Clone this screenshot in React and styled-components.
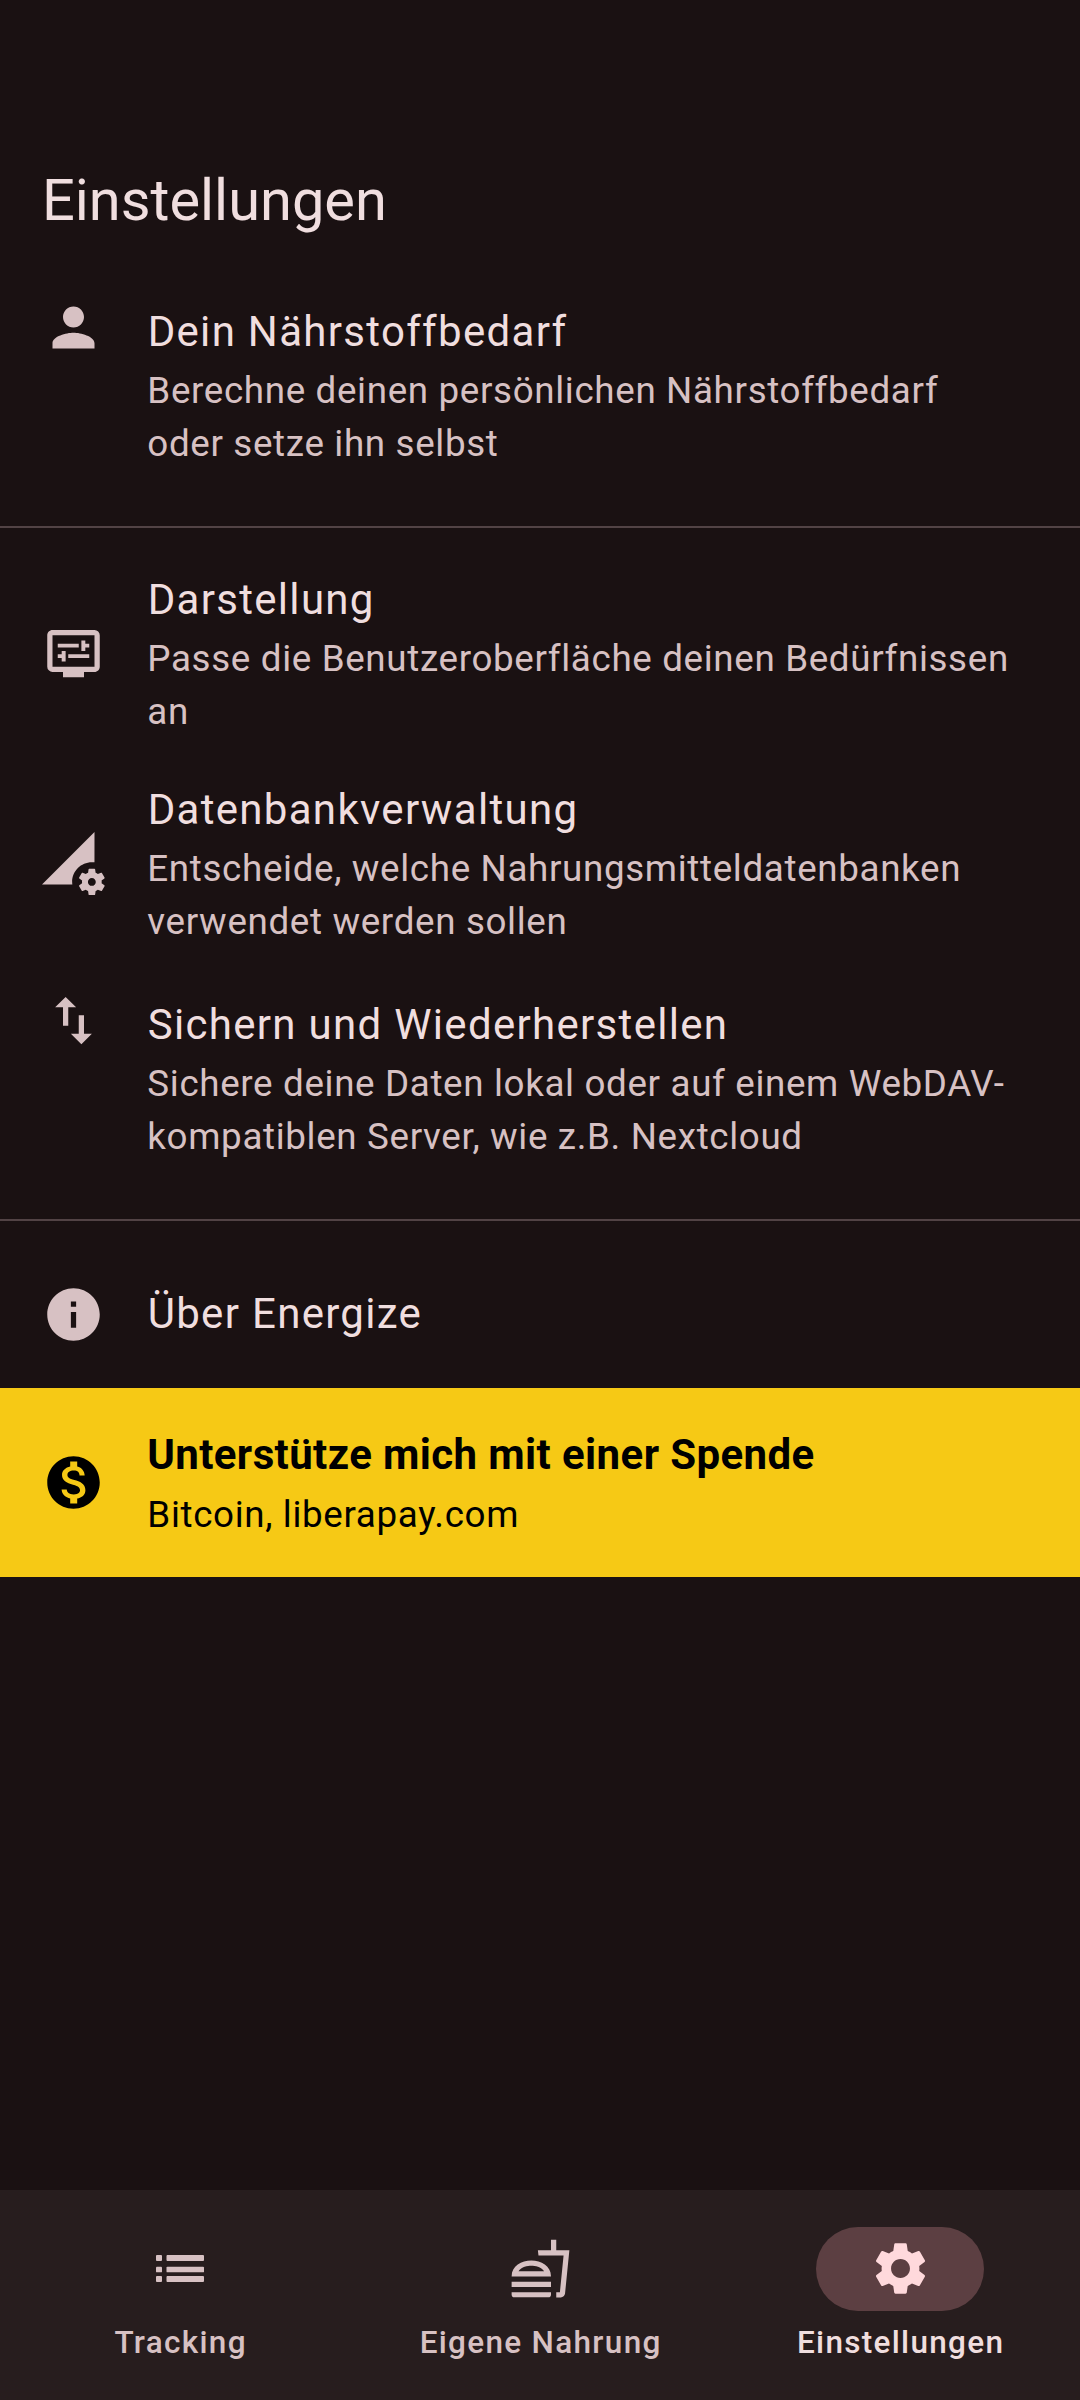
import React from "react";
import styled, { createGlobalStyle } from "styled-components";
import { MdPerson, MdOutlineDisplaySettings, MdPermDataSetting, MdImportExport, MdInfo, MdMonetizationOn, MdOutlineFastfood, MdSettings } from "react-icons/md";

const Global = createGlobalStyle`
  * { box-sizing: border-box; }
  body { margin: 0; background: #1a1112; font-family: Roboto, sans-serif; }
`;
const Screen = styled.div`
  width: 1080px; height: 2400px; display: flex; flex-direction: column;
  background: #1a1112; color: #f0dedf;
`;
const Title = styled.h1`
  margin: 0; padding: 162px 42px 0; height: 283px; font-size: 57.75px; line-height: 76px; font-weight: 400;
`;
const Item = styled.div`
  display: flex; padding: ${(p) => p.$pad};
  height: ${(p) => p.$h}px;
  align-items: ${(p) => (p.$top ? "flex-start" : "center")};
  background: ${(p) => (p.$gold ? "#f6c915" : "transparent")};
  color: ${(p) => (p.$gold ? "#000" : "#d7c1c3")};
`;
const IconBox = styled.div`
  width: 63px; height: 63px; margin-right: 42px; flex: none; display: flex;
  svg { width: 63px; height: 63px; display: block; }
`;
const Texts = styled.div`
  flex: 1; white-space: nowrap;
  padding: ${(p) => (p.$top ? "4px 0 0" : p.$gold ? "0 0 1px" : "0")};
`;
const Headline = styled.div`
  font-size: 42px; line-height: 63px; margin-bottom: ${(p) => (p.$bold ? 2 : 1)}px;
  padding-left: ${(p) => (p.$bold ? 0.2 : 0.65)}px;
  letter-spacing: ${(p) => (p.$bold ? 0.39 : 1.3125)}px;
  font-weight: ${(p) => (p.$bold ? 700 : 400)};
  color: ${(p) => (p.$bold ? "#000" : "#f0dedf")};
`;
const Sub = styled.div`font-size: 36.75px; line-height: 53px; letter-spacing: 0.656px; padding-left: 0.33px;`;
const Rule = styled.div`height: 2px; background: #524345; flex: none;`;
const Nav = styled.nav`
  margin-top: auto; height: 210px; background: #271d1e; display: flex; padding-top: 37px;
`;
const Tab = styled.div`
  flex: 1; display: flex; flex-direction: column; align-items: center;
  color: ${(p) => (p.$on ? "#f0dedf" : "#d7c1c3")};
`;
const Pill = styled.div`
  width: 168px; height: 84px; padding-bottom: 1px; border-radius: 42px; display: flex; align-items: center; justify-content: center;
  background: ${(p) => (p.$on ? "#5c3f42" : "transparent")};
  color: ${(p) => (p.$on ? "#ffd9dc" : "#d7c1c3")};
  font-size: 63px;
`;
const Label = styled.div`
  margin-top: 11px; padding-left: 1.3px; font-size: 31.5px; line-height: 42px; font-weight: 500; letter-spacing: 1.3125px;
`;

const bars = [[18, 6], [29.7, 5.6], [39, 6]];

function ListIcon() {
  return (
    <svg width="64" height="63" viewBox="0 0 64 63" fill="currentColor">
      {bars.map(([y, h]) => (
        <React.Fragment key={y}>
          <rect x="8" y={y} width="6" height={h} rx="0.9" />
          <rect x="18.5" y={y} width="37.5" height={h} rx="0.9" />
        </React.Fragment>
      ))}
    </svg>
  );
}

function Entry({ icon: Icon, title, lines = [], ...rest }) {
  return (
    <Item {...rest}>
      <IconBox><Icon /></IconBox>
      <Texts $top={rest.$top} $gold={rest.$gold}>
        <Headline $bold={rest.$gold}>{title}</Headline>
        {lines.map((l) => <Sub key={l}>{l}</Sub>)}
      </Texts>
    </Item>
  );
}

const tabs = [
  ["Tracking", ListIcon],
  ["Eigene Nahrung", MdOutlineFastfood],
  ["Einstellungen", MdSettings, true],
];

export default function App() {
  return (
    <Screen>
      <Global />
      <Title>Einstellungen</Title>
      <Entry icon={MdPerson} title="Dein Nährstoffbedarf" lines={["Berechne deinen persönlichen Nährstoffbedarf", "oder setze ihn selbst"]} $h={243} $top $pad="13px 42px 0" />
      <Rule />
      <Entry icon={MdOutlineDisplaySettings} title="Darstellung" lines={["Passe die Benutzeroberfläche deinen Bedürfnissen", "an"]} $h={210} $pad="40px 42px 0" />
      <Entry icon={MdPermDataSetting} title="Datenbankverwaltung" lines={["Entscheide, welche Nahrungsmitteldatenbanken", "verwendet werden sollen"]} $h={210} $pad="40px 42px 0" />
      <Entry icon={MdImportExport} title="Sichern und Wiederherstellen" lines={["Sichere deine Daten lokal oder auf einem WebDAV-", "kompatiblen Server, wie z.B. Nextcloud"]} $h={271} $top $pad="41px 42px 0" />
      <Rule />
      <Entry icon={MdInfo} title="Über Energize" $h={167} $pad="19px 42px 0" />
      <Entry icon={MdMonetizationOn} title="Unterstütze mich mit einer Spende" lines={["Bitcoin, liberapay.com"]} $h={189} $pad="0 42px" $gold />
      <Nav>
        {tabs.map(([name, Icon, on]) => (
          <Tab key={name} $on={on}>
            <Pill $on={on}><Icon /></Pill>
            <Label>{name}</Label>
          </Tab>
        ))}
      </Nav>
    </Screen>
  );
}
